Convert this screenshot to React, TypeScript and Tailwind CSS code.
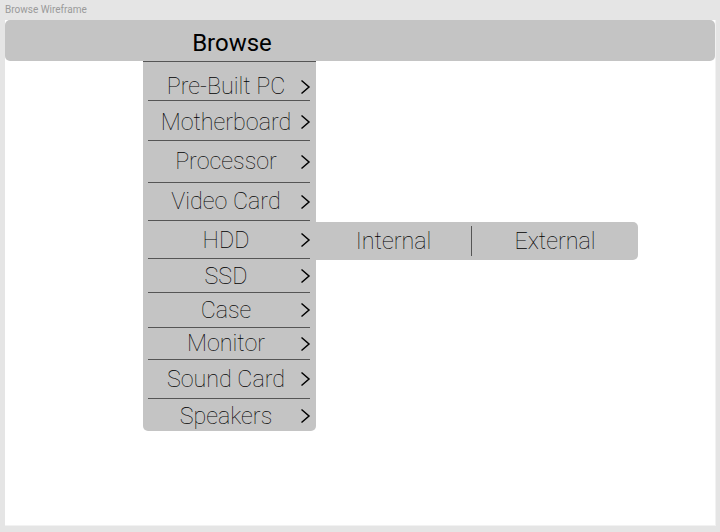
import React from 'react';

const items: { label: string; h: string; pt: string }[] = [
  { label: 'Pre-Built PC', h: 'h-[39px]', pt: 'pt-[11px]' },
  { label: 'Motherboard', h: 'h-[40px]', pt: 'pt-[3px]' },
  { label: 'Processor', h: 'h-[42px]', pt: 'pt-0' },
  { label: 'Video Card', h: 'h-[38px]', pt: 'pt-0' },
  { label: 'HDD', h: 'h-[38px]', pt: 'pt-[1px]' },
  { label: 'SSD', h: 'h-[34px]', pt: 'pt-[1px]' },
  { label: 'Case', h: 'h-[35px]', pt: 'pt-0' },
  { label: 'Monitor', h: 'h-[32px]', pt: 'pt-0' },
  { label: 'Sound Card', h: 'h-[39px]', pt: 'pt-0' },
  { label: 'Speakers', h: 'h-[32px]', pt: 'pt-[3px]' },
];

const Chevron = () => (
  <svg width="11" height="16" viewBox="0 0 11 16" className="text-black">
    <polyline points="1.5,1.5 9,8 1.5,14.5" fill="none" stroke="currentColor" strokeWidth="1.5" />
  </svg>
);

const MenuRow: React.FC<{ label: string; h: string; pt: string; last: boolean }> = ({ label, h, pt, last }) => (
  <div className={`relative flex items-center ${h}`}>
    <div className={`flex flex-1 items-center ${pt}`}>
      <span className="flex-1 pl-[10px] text-center text-[23.3px] font-thin leading-none text-black">{label}</span>
      <span className="flex w-[17px] pl-[1px]">
        <Chevron />
      </span>
    </div>
    {!last && <div className="absolute bottom-0 left-[5px] right-[6px] h-px bg-[#555]" />}
    {label === 'HDD' && (
      <div className="absolute left-full top-[1px] flex h-[38px] w-[322px] items-center rounded-r-[5px] bg-[#c4c4c4] text-[23.3px] font-thin text-black">
        <span className="w-[155px] text-center">Internal</span>
        <div className="h-[30px] w-px bg-[#555]" />
        <span className="flex-1 text-center">External</span>
      </div>
    )}
  </div>
);

export default function App() {
  return (
    <div className="flex h-[532px] w-[720px] flex-col bg-[#e5e5e5] px-[5px] pb-[6px]" style={{ fontFamily: 'Roboto, "Noto Sans", sans-serif' }}>
      <div className="h-[20px] pt-[4px] text-[10px] leading-[12px] text-[#9a9a9a]">Browse Wireframe</div>
      <div className="flex w-[711px] flex-1 flex-col border-r border-b border-[#f2f2f2] bg-white">
        <div className="flex h-[41px] items-center justify-center rounded-[5px] bg-[#c4c4c4] pr-[256px] pt-[5px] text-[24px] font-normal text-black">
          Browse
        </div>
        <div className="ml-[138px] w-[173px] rounded-b-[5px] border-t border-[#555] bg-[#c4c4c4]">
          {items.map((it, i) => (
            <MenuRow key={it.label} label={it.label} h={it.h} pt={it.pt} last={i === items.length - 1} />
          ))}
        </div>
      </div>
    </div>
  );
}
